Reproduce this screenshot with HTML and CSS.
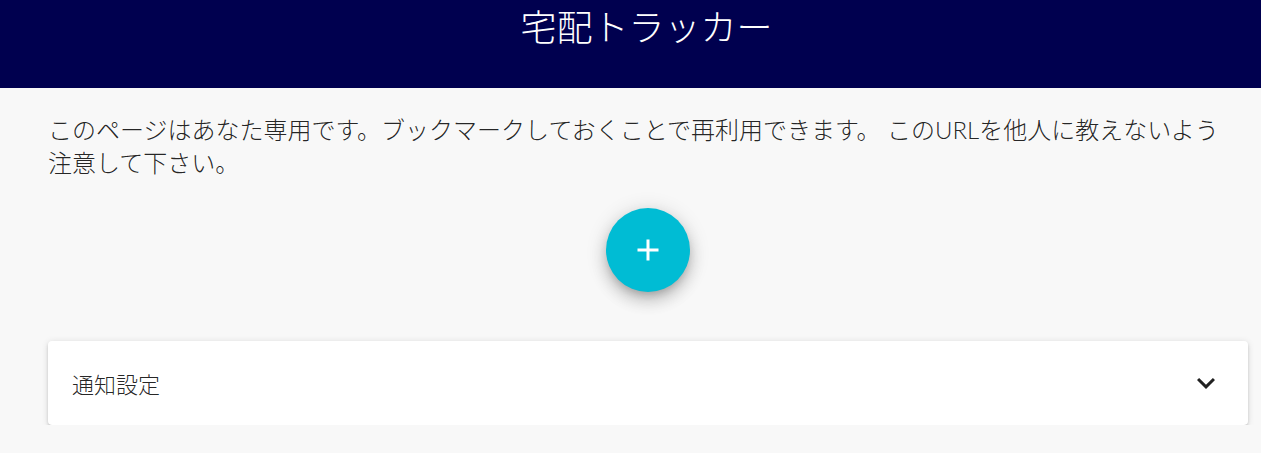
FILE: index.html
```html
<!DOCTYPE html>
<html>

<head>
	<meta charset="utf-8">
	<title>宅配トラッカー</title>
	<link rel="stylesheet" href="styles.css">
</head>

<body>
	<div class="header">
		<div class="title">宅配トラッカー</div>
	</div>
	<div class="main">
		<p class="notice">このページはあなた専用です。ブックマークしておくことで再利用できます。 このURLを他人に教えないよう注意して下さい。</p>
		<div class="fab-row">
			<button class="fab" type="button">
				<svg viewBox="0 0 24 24" width="36" height="36"><path d="M19 13h-6v6h-2v-6H5v-2h6V5h2v6h6v2z" fill="#ffffff"/></svg>
			</button>
		</div>
		<div class="panel">
			<span class="panel-title">通知設定</span>
			<svg class="chevron" viewBox="0 0 24 24" width="36" height="36"><path d="M7.41 8.59L12 13.17l4.59-4.58L18 10l-6 6-6-6 1.41-1.41z" fill="rgba(0,0,0,0.87)"/></svg>
		</div>
	</div>
</body>

</html>
```

FILE: styles.css
```css
* {
	margin: 0;
	padding: 0;
	box-sizing: border-box;
}
body {
	background-color: #f8f8f8;
	font-family: "Lato", "Noto Sans CJK JP", sans-serif;
	font-weight: 300;
	color: rgba(0, 0, 0, 0.87);
}
.header {
	height: 88px;
	background-color: #00004f;
	text-align: center;
	padding-left: 32px;
}
.title {
	padding-top: 5px;
	font-size: 36px;
	line-height: 44px;
	color: #ffffff;
}
.main {
	padding: 25px 13px 0 48px;
}
.notice {
	font-size: 24px;
	line-height: 33px;
	padding-right: 20px;
}
.fab-row {
	display: flex;
	justify-content: center;
	padding: 29px 0 49px 0;
}
.fab {
	width: 84px;
	height: 84px;
	border-radius: 50%;
	border: none;
	outline: none;
	background-color: #00bcd4;
	display: flex;
	align-items: center;
	justify-content: center;
	box-shadow: 0 5px 8px -3px rgba(0, 0, 0, 0.2), 0 9px 15px 1px rgba(0, 0, 0, 0.14), 0 3px 20px 2px rgba(0, 0, 0, 0.12);
	cursor: pointer;
}
.panel {
	width: 1200px;
	height: 84px;
	background-color: #ffffff;
	border-radius: 4px;
	display: flex;
	align-items: center;
	justify-content: space-between;
	padding: 0 24px;
	box-shadow: 0 3px 2px -2px rgba(0, 0, 0, 0.2), 0 2px 3px 0 rgba(0, 0, 0, 0.14), 0 1px 7px 0 rgba(0, 0, 0, 0.12);
}
.panel-title {
	font-size: 22px;
}
.chevron {
	display: block;
}
```
